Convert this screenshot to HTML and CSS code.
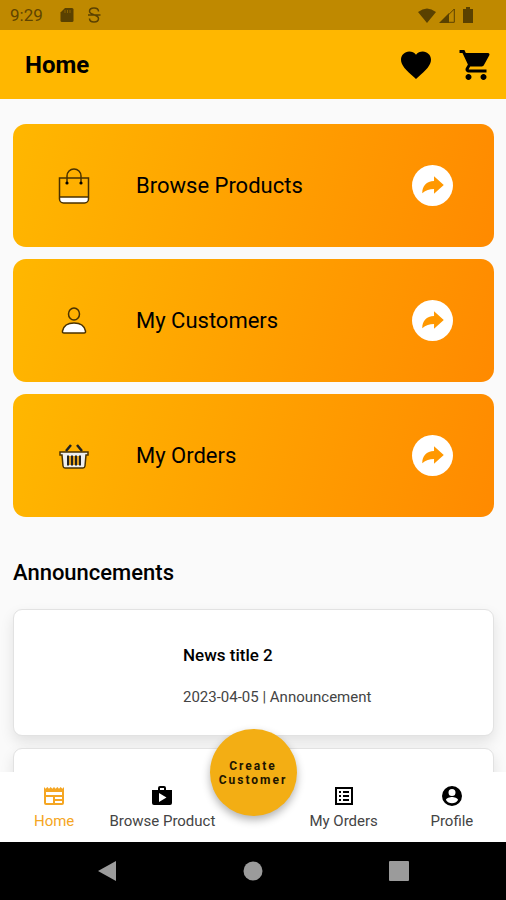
FILE: index.html
```html
<!DOCTYPE html>
<html lang="en">
<head>
  <meta charset="UTF-8" />
  <meta name="viewport" content="width=device-width, initial-scale=1.0" />
  <title>Home</title>
  <link rel="stylesheet" href="styles.css">
</head>
<body>
  <div class="status-bar">
    <span class="status-time">9:29</span>
    <svg class="status-icon" viewBox="0 0 16 16" aria-hidden="true">
      <path d="M6 1h7a1.500 1.500 0 0 1 1.500 1.500v11A1.500 1.500 0 0 1 13 15H3a1.500 1.500 0 0 1-1.500-1.500V5.500z" />
      <path class="status-slots" d="M6 3v3M8.500 3v3M11 3v3" />
    </svg>
    <svg class="status-icon status-line" viewBox="0 0 16 16" aria-hidden="true">
      <path d="M12.500 4.500C12.500 2.300 11 1 8 1S3.500 2.300 3.500 4.300C3.500 8.500 12.500 7 12.500 11.500c0 2.200-1.500 3.500-4.500 3.500s-4.500-1.300-4.500-3.500M2 8h12.500" />
    </svg>
    <div class="status-right">
      <svg class="wifi" viewBox="0 0 18 15" aria-hidden="true"><path d="M0 4Q9-3 18 4L9 15z" /></svg>
      <svg class="signal" viewBox="0 0 16 16" aria-hidden="true">
        <path d="M0 16L10 6V16z" />
        <path class="signal-edge" d="M2 15.300H15.300V2z" />
      </svg>
      <svg class="battery" viewBox="0 0 10 16" aria-hidden="true"><path d="M3 0h4v2h3v14H0V2h3z" /></svg>
    </div>
  </div>

  <header class="app-bar">
    <h1>Home</h1>
    <button class="icon-btn" type="button" aria-label="Favourites">
      <svg viewBox="0 0 24 24"><path d="M12 21.350l-1.450-1.320C5.400 15.360 2 12.280 2 8.500 2 5.420 4.420 3 7.500 3c1.740 0 3.410.810 4.500 2.090C13.090 3.810 14.760 3 16.500 3 19.580 3 22 5.420 22 8.500c0 3.780-3.400 6.860-8.550 11.540z" /></svg>
    </button>
    <button class="icon-btn" type="button" aria-label="Cart">
      <svg viewBox="0 0 24 24"><path d="M7 18c-1.100 0-1.990.900-1.990 2S5.900 22 7 22s2-.900 2-2-.900-2-2-2zM1 2v2h2l3.600 7.590-1.350 2.450c-.160.280-.250.610-.250.960 0 1.100.900 2 2 2h12v-2H7.420c-.140 0-.250-.110-.250-.250l.030-.120.900-1.630h7.450c.750 0 1.410-.410 1.750-1.030l3.580-6.490A1 1 0 0 0 20 4H5.210l-.940-2zm16 16c-1.100 0-1.990.900-1.990 2s.890 2 1.990 2 2-.900 2-2-.900-2-2-2z" /></svg>
    </button>
  </header>

  <main>
    <div class="menu">
      <a class="menu-card" href="#">
        <svg class="menu-icon" viewBox="0 0 32 36" aria-hidden="true">
          <path class="fill-white" d="M1.500 29h29v2a4 4 0 0 1-4 4h-21a4 4 0 0 1-4-4z" />
          <path class="outline" d="M1.500 10h29v21a4 4 0 0 1-4 4h-21a4 4 0 0 1-4-4zM1.500 29h29M9 15V8a7 7 0 0 1 14 0v7" />
          <circle cx="9" cy="15" r="1.600" /><circle cx="23" cy="15" r="1.600" />
        </svg>
        <span>Browse Products</span>
        <svg class="go" viewBox="0 0 40 40" aria-hidden="true"><circle cx="20" cy="20" r="20" /><path d="M10 27.500c0-7.500 4-11.500 11.500-12V11l9.500 8.500-9.500 8.500v-4.500c-4.500 0-8 1-11.500 4z" /></svg>
      </a>
      <a class="menu-card" href="#">
        <svg class="menu-icon" viewBox="0 0 32 36" aria-hidden="true">
          <ellipse class="outline" cx="16" cy="11" rx="5.500" ry="6" />
          <path class="outline fill-white" d="M4.500 28c1-5 5.500-8 11.500-8s10.500 3 11.500 8q.300 2-1.500 2H6q-1.800 0-1.500-2z" />
        </svg>
        <span>My Customers</span>
        <svg class="go" viewBox="0 0 40 40" aria-hidden="true"><circle cx="20" cy="20" r="20" /><path d="M10 27.500c0-7.500 4-11.500 11.500-12V11l9.500 8.500-9.500 8.500v-4.500c-4.500 0-8 1-11.500 4z" /></svg>
      </a>
      <a class="menu-card" href="#">
        <svg class="menu-icon" viewBox="0 0 32 36" aria-hidden="true">
          <path class="outline basket" d="M2 14h28v3h-2l-1 11q-.300 2-2 2H7q-1.700 0-2-2L4 17H2z" />
          <path class="slots" d="M9.500 18h13v9h-13z" />
          <path class="bars" d="M10 17.500v10M14 17.500v10M18 17.500v10M22 17.500v10" />
          <path class="handles" d="M8 13l5-6M24 13l-5-6" />
        </svg>
        <span>My Orders</span>
        <svg class="go" viewBox="0 0 40 40" aria-hidden="true"><circle cx="20" cy="20" r="20" /><path d="M10 27.500c0-7.500 4-11.500 11.500-12V11l9.500 8.500-9.500 8.500v-4.500c-4.500 0-8 1-11.500 4z" /></svg>
      </a>
    </div>

    <section class="news">
      <h2>Announcements</h2>
      <article class="news-card">
        <h3>News title 2</h3>
        <p>2023-04-05 | Announcement</p>
      </article>
      <article class="news-card"></article>
    </section>
  </main>

  <nav class="tab-bar">
    <a class="tab active" href="#">
      <svg viewBox="0 0 24 24" aria-hidden="true"><path fill-rule="evenodd" d="M22 3l-1.670 1.670L18.670 3 17 4.670 15.330 3l-1.660 1.670L12 3l-1.670 1.670L8.670 3 7 4.670 5.330 3 3.670 4.670 2 3v16a2 2 0 0 0 2 2h16a2 2 0 0 0 2-2zM11 19H4v-6h7zM20 19h-7v-2h7zM20 15h-7v-2h7zM20 11H4V8h16z" /></svg>
      Home
    </a>
    <a class="tab" href="#">
      <svg viewBox="0 0 24 24" aria-hidden="true"><path fill-rule="evenodd" d="M16 6V4a2 2 0 0 0-2-2h-4a2 2 0 0 0-2 2v2H2v13a2 2 0 0 0 2 2h16a2 2 0 0 0 2-2V6zM10 4h4v2h-4zM9 18V9l7.500 4.500z" /></svg>
      Browse Product
    </a>
    <div class="fab-slot">
      <button class="fab" type="button">Create Customer</button>
    </div>
    <a class="tab" href="#">
      <svg viewBox="0 0 24 24" aria-hidden="true"><path fill-rule="evenodd" d="M3 3h18v18H3zM5 5v14h14V5zM7 7h2v2H7zM11 7h6v2h-6zM7 11h2v2H7zM11 11h6v2h-6zM7 15h2v2H7zM11 15h6v2h-6z" /></svg>
      My Orders
    </a>
    <a class="tab" href="#">
      <svg viewBox="0 0 24 24" aria-hidden="true"><path fill-rule="evenodd" d="M12 2a10 10 0 1 0 0 20 10 10 0 0 0 0-20zm0 3a3.500 3.500 0 1 1 0 7 3.500 3.500 0 0 1 0-7zm0 14.200a7.200 7.200 0 0 1-6-3.220c.030-1.990 4-3.080 6-3.080s5.970 1.090 6 3.080a7.200 7.200 0 0 1-6 3.220z" /></svg>
      Profile
    </a>
  </nav>

  <div class="system-bar">
    <button type="button" aria-label="Back"><svg viewBox="0 0 20 20"><path d="M1 10L19 0v20z" /></svg></button>
    <button type="button" aria-label="Home screen"><svg viewBox="0 0 20 20"><circle cx="10" cy="10" r="9.500" /></svg></button>
    <button type="button" aria-label="Recent apps"><svg viewBox="0 0 20 20"><rect width="20" height="20" rx="1" /></svg></button>
  </div>
</body>
</html>
```
FILE: styles.css
```css
* {
  box-sizing: border-box;
}

body {
  font-family: Roboto, sans-serif;
  margin: 0;
  height: 100vh;
  display: flex;
  flex-direction: column;
  background: #fafafa;
  color: #000;
  overflow: hidden;
}

svg {
  display: block;
  flex: none;
}

h1, h2, h3, p {
  margin: 0;
}

a {
  color: inherit;
  text-decoration: none;
}

button {
  border: none;
  padding: 0;
  background: none;
  font-family: inherit;
  cursor: pointer;
}

.status-bar {
  display: flex;
  align-items: center;
  flex: none;
  height: 30px;
  padding: 0 33px 0 10px;
  background: #bf8900;
  color: #5f4400;
}

.status-bar svg {
  fill: #5a4100;
}

.status-time {
  font-size: 17px;
  line-height: 30px;
  margin-right: 16px;
}

.status-icon {
  width: 16px;
  height: 16px;
  margin-right: 11px;
}

.status-slots {
  stroke: #8a6300;
}

.status-bar .status-line {
  fill: none;
  stroke: #5a4100;
  stroke-width: 1.5;
}

.status-right {
  display: flex;
  align-items: center;
  margin-left: auto;
}

.wifi {
  width: 18px;
  height: 15px;
  margin-right: 3px;
}

.signal {
  width: 16px;
  height: 16px;
  margin-right: 8px;
}

.signal-edge {
  fill: none;
  stroke: #5a4100;
}

.battery {
  width: 10px;
  height: 16px;
}

.app-bar {
  display: flex;
  align-items: center;
  flex: none;
  gap: 24px;
  height: 69px;
  padding: 0 12px 0 25px;
  background: #ffb700;
}

.app-bar h1 {
  flex: 1;
  font-size: 24px;
  font-weight: 700;
}

.icon-btn svg {
  width: 36px;
  height: 36px;
}

main {
  flex: 1;
  min-height: 0;
  padding: 25px 12px 0 13px;
  overflow: hidden;
}

.menu {
  display: flex;
  flex-direction: column;
  gap: 12px;
}

.menu-card {
  display: flex;
  align-items: center;
  height: 123px;
  padding: 0 41px 0 45px;
  border-radius: 13px;
  background: linear-gradient(105deg, #ffb700, #ff8a00);
  font-size: 22px;
}

.menu-card span {
  flex: 1;
}

.menu-icon {
  width: 32px;
  height: 36px;
  margin-right: 46px;
}

.outline {
  fill: none;
  stroke: #4a3200;
  stroke-width: 1.5;
}

.fill-white {
  fill: #fff;
}

.basket {
  fill: #eee;
}

.slots {
  fill: #e0a020;
}

.bars {
  stroke: #222;
  stroke-width: 2;
}

.handles {
  stroke: #222;
  stroke-width: 2.5;
}

.go {
  width: 41px;
  height: 41px;
}

.go circle {
  fill: #fff;
}

.go path {
  fill: #ff9800;
}

.news {
  padding-top: 42px;
}

.news h2 {
  margin-bottom: 22px;
  font-size: 22px;
  line-height: 28px;
  font-weight: 500;
}

.news-card {
  display: flex;
  flex-direction: column;
  gap: 20px;
  height: 127px;
  margin-bottom: 12px;
  padding: 34px 12px 0 169px;
  border: 1px solid #e2e2e2;
  border-radius: 9px;
  background: #fff;
  box-shadow: 0 6px 14px rgba(0, 0, 0, 0.1);
}

.news-card h3 {
  font-size: 17px;
  line-height: 22px;
  font-weight: 500;
}

.news-card p {
  color: #444;
  font-size: 15px;
  line-height: 22px;
}

.tab-bar {
  display: flex;
  flex: none;
  height: 70px;
  background: #fff;
}

.tab {
  display: flex;
  flex: 1;
  flex-direction: column;
  align-items: center;
  gap: 4px;
  padding-top: 12px;
  color: #444;
  font-size: 15px;
  line-height: 18px;
  white-space: nowrap;
}

.tab svg {
  width: 24px;
  height: 24px;
  fill: #000;
}

.active {
  color: #f5a623;
}

.active svg {
  fill: #f5a623;
}

.fab-slot {
  position: relative;
  width: 73px;
}

.fab {
  position: absolute;
  top: -43px;
  left: -7px;
  width: 87px;
  height: 87px;
  border-radius: 50%;
  background: #f3ae14;
  box-shadow: 0 4px 8px rgba(0, 0, 0, 0.3);
  color: #1c1400;
  font-size: 12px;
  line-height: 14px;
  font-weight: 700;
  letter-spacing: 2px;
}

.system-bar {
  display: flex;
  justify-content: center;
  align-items: center;
  flex: none;
  gap: 126px;
  height: 58px;
  background: #000;
}

.system-bar svg {
  width: 20px;
  height: 20px;
  fill: #9b9b9b;
}
```
